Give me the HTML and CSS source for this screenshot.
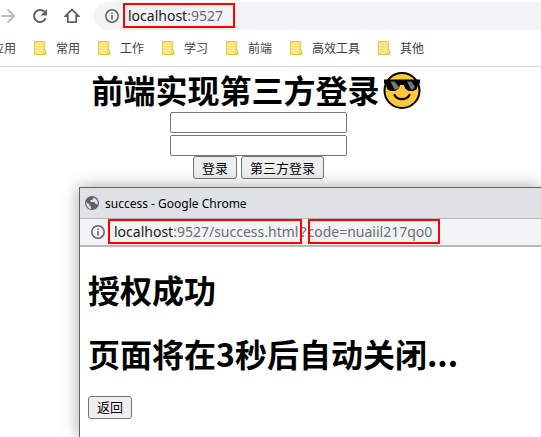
FILE: index.html
```html
<!DOCTYPE html>
<html lang="zh-CN">
<head>
<meta charset="utf-8">
<title>前端实现第三方登录</title>
<link rel="stylesheet" href="styles.css">
</head>
<body>
<svg class="defs" aria-hidden="true">
  <symbol id="info" viewBox="0 0 14 14">
    <circle cx="7" cy="7" r="6.2" fill="none" stroke="#5f6368" stroke-width="1.5"/>
    <path d="M7 6v4.4M7 3.4v1.6" fill="none" stroke="#5f6368" stroke-width="1.6"/>
  </symbol>
  <symbol id="folder" viewBox="0 0 12 14">
    <path d="M.5.5h10v9h1v4H.5z" fill="#fde68c" stroke="#e5c83c"/>
    <path d="M9.500 13.500v-3l1-1 1 1v3z" fill="#fde68c" stroke="#e5c83c"/>
  </symbol>
</svg>
<header>
  <nav class="toolbar">
    <button class="tool" aria-label="前进"><svg width="16" height="16" viewBox="0 0 16 16"><path d="M1 8h13M7.500 1.500L14 8l-6.500 6.500" fill="none" stroke="#babcbe" stroke-width="2"/></svg></button>
    <button class="tool" aria-label="刷新"><svg width="16" height="16" viewBox="0 0 16 16"><path d="M13.700 10A6 6 0 1 1 12.300 3.800" fill="none" stroke="#5f6368" stroke-width="2"/><path d="M15 1v6.500H8.500z" fill="#5f6368"/></svg></button>
    <button class="tool" aria-label="主页"><svg width="16" height="16" viewBox="0 0 16 16"><path d="M8 1.500L1.500 8h2.300v6.200h8.400V8h2.300z" fill="none" stroke="#5f6368" stroke-width="1.800"/></svg></button>
    <div class="omnibox">
      <svg class="info"><use href="#info"/></svg>
      <span class="mark"><b>localhost</b>:9527</span>
    </div>
  </nav>
  <nav class="bookmarks">
    <a href="#">应用</a>
    <a href="#"><svg class="folder"><use href="#folder"/></svg>常用</a>
    <a href="#"><svg class="folder"><use href="#folder"/></svg>工作</a>
    <a href="#"><svg class="folder"><use href="#folder"/></svg>学习</a>
    <a href="#"><svg class="folder"><use href="#folder"/></svg>前端</a>
    <a href="#"><svg class="folder"><use href="#folder"/></svg>高效工具</a>
    <a href="#"><svg class="folder"><use href="#folder"/></svg>其他</a>
  </nav>
</header>
<main class="login">
  <h1>前端实现第三方登录<svg class="emoji" viewBox="0 0 40 40" role="img" aria-label="墨镜笑脸">
    <circle cx="20" cy="20.500" r="17.500" fill="#ffc83d" stroke="#000" stroke-width="2"/>
    <path d="M2 9.500h36v4l-2 .5c-.5 5-2 7-6.500 7-4.500 0-6.500-2-7.500-6h-4c-1 4-3 6-7.500 6-4.500 0-6-2-6.500-7l-2-.5z"/>
    <path d="M8.500 11.500h4l5 6-2 2h-3zM25 11.500h4l4 5-2 3h-2z" fill="#777"/>
    <path d="M12.500 25c3 5.500 12 5.500 15 0" fill="none" stroke="#000" stroke-width="2.200" stroke-linecap="round"/>
  </svg></h1>
  <input type="text" aria-label="用户名">
  <input type="password" aria-label="密码">
  <div class="actions"><button class="btn">登录</button><button class="btn">第三方登录</button></div>
</main>
<section class="popup">
  <div class="titlebar">
    <svg width="14" height="14" viewBox="0 0 14 14"><circle cx="7" cy="7" r="7" fill="#5f6368"/><path d="M1.500 6l3 2.500v1.200l1.500 1V13C3 12.500 1 10 1.500 6zM8.500 1.500v1L7 4H5.500v2h4l1 2h1l1 1c1-3-.5-6.500-4-7.500z" fill="#dee1e6"/></svg>
    <span>success - Google Chrome</span>
  </div>
  <div class="address">
    <svg class="info"><use href="#info"/></svg>
    <span class="mark"><b>localhost</b>:9527/success.html</span><span class="sep">?</span><span class="mark tight">code=nuaiil217qo0</span>
  </div>
  <div class="result">
    <h1>授权成功</h1>
    <h1>页面将在3秒后自动关闭...</h1>
    <button class="btn">返回</button>
  </div>
</section>
</body>
</html>
```
FILE: styles.css
```css
* { box-sizing: border-box; }

html, body { height: 100%; }

body {
  margin: 0;
  position: relative;
  overflow: hidden;
  background: #fff;
  color: #000;
  font-family: "Noto Sans", "Noto Sans CJK SC", sans-serif;
}

.defs { position: absolute; width: 0; height: 0; }

svg { display: block; flex: none; }

.toolbar {
  display: flex;
  align-items: center;
  gap: 16px;
  height: 32px;
}

.tool {
  padding: 0;
  border: 0;
  background: none;
}

.omnibox {
  flex: 1;
  display: flex;
  align-items: center;
  gap: 9px;
  height: 28px;
  margin-left: -2px;
  padding-left: 11px;
  border-radius: 14px 0 0 14px;
  background: #f1f3f4;
}

.omnibox, .address {
  color: #6b6e72;
  font-size: 14px;
  line-height: 20px;
  white-space: nowrap;
}

.info { width: 14px; height: 14px; }

b { color: #202124; font-weight: 400; }

.mark { position: relative; }

.mark::after {
  content: "";
  position: absolute;
  inset: -3px -12px -2px -5px;
  border: 2px solid #f00;
}

.bookmarks {
  display: flex;
  align-items: center;
  gap: 18px;
  height: 35px;
  margin-left: -8px;
  padding-bottom: 2px;
  border-bottom: 1px solid #dadce0;
}

.bookmarks a {
  display: flex;
  align-items: center;
  gap: 10px;
  color: #3c4043;
  font-family: "Noto Sans CJK SC", sans-serif;
  font-size: 12px;
  line-height: 16px;
  text-decoration: none;
  white-space: nowrap;
}

.folder { width: 12px; height: 14px; }

h1 {
  margin: 0;
  font-family: "Noto Sans CJK SC", sans-serif;
  font-size: 32px;
  font-weight: 700;
  line-height: 43px;
  white-space: nowrap;
}

.login {
  display: flex;
  flex-direction: column;
  align-items: center;
  padding: 1px 24px 0 0;
}

.login h1 {
  display: flex;
  align-items: center;
  margin: 0 4px 1px 0;
}

.emoji { width: 40px; height: 40px; margin-left: 2px; }

.login input {
  width: 177px;
  height: 21px;
  margin-bottom: 2px;
  border: 1px solid #767676;
  border-radius: 2px;
  background: #fff;
}

.actions { display: flex; gap: 4px; margin-top: -2px; }

.btn {
  height: 23px;
  padding: 0 8px;
  border: 1px solid #767676;
  border-radius: 3px;
  background: #efefef;
  color: #000;
  font-family: "Noto Sans CJK SC", sans-serif;
  font-size: 13px;
  line-height: 20px;
}

.popup {
  position: absolute;
  inset: 187px 0 0 79px;
  border: solid #606265;
  border-width: 1px 0 0 1px;
  background: #fff;
  box-shadow: 0 0 16px rgba(0, 0, 0, .35);
}

.titlebar {
  display: flex;
  align-items: center;
  gap: 6px;
  height: 31px;
  padding-left: 5px;
  border-bottom: 1px solid #b4b6b9;
  background: #dee1e6;
  font-size: 12px;
}

.address {
  display: flex;
  align-items: center;
  height: 28px;
  padding-left: 11px;
  border-bottom: 2px solid #b8b9ba;
  background: #f1f3f4;
}

.address .info { margin-right: 9px; }

.sep { padding: 0 1px 0 2px; }

.address .mark::after { right: -4px; left: -6px; }

.address .tight::after { left: 0; right: -8px; }

.result { padding: 21px 8px; }

.result h1 { margin-bottom: 21px; }

.result h1:last-of-type { margin-bottom: 20px; }
```
